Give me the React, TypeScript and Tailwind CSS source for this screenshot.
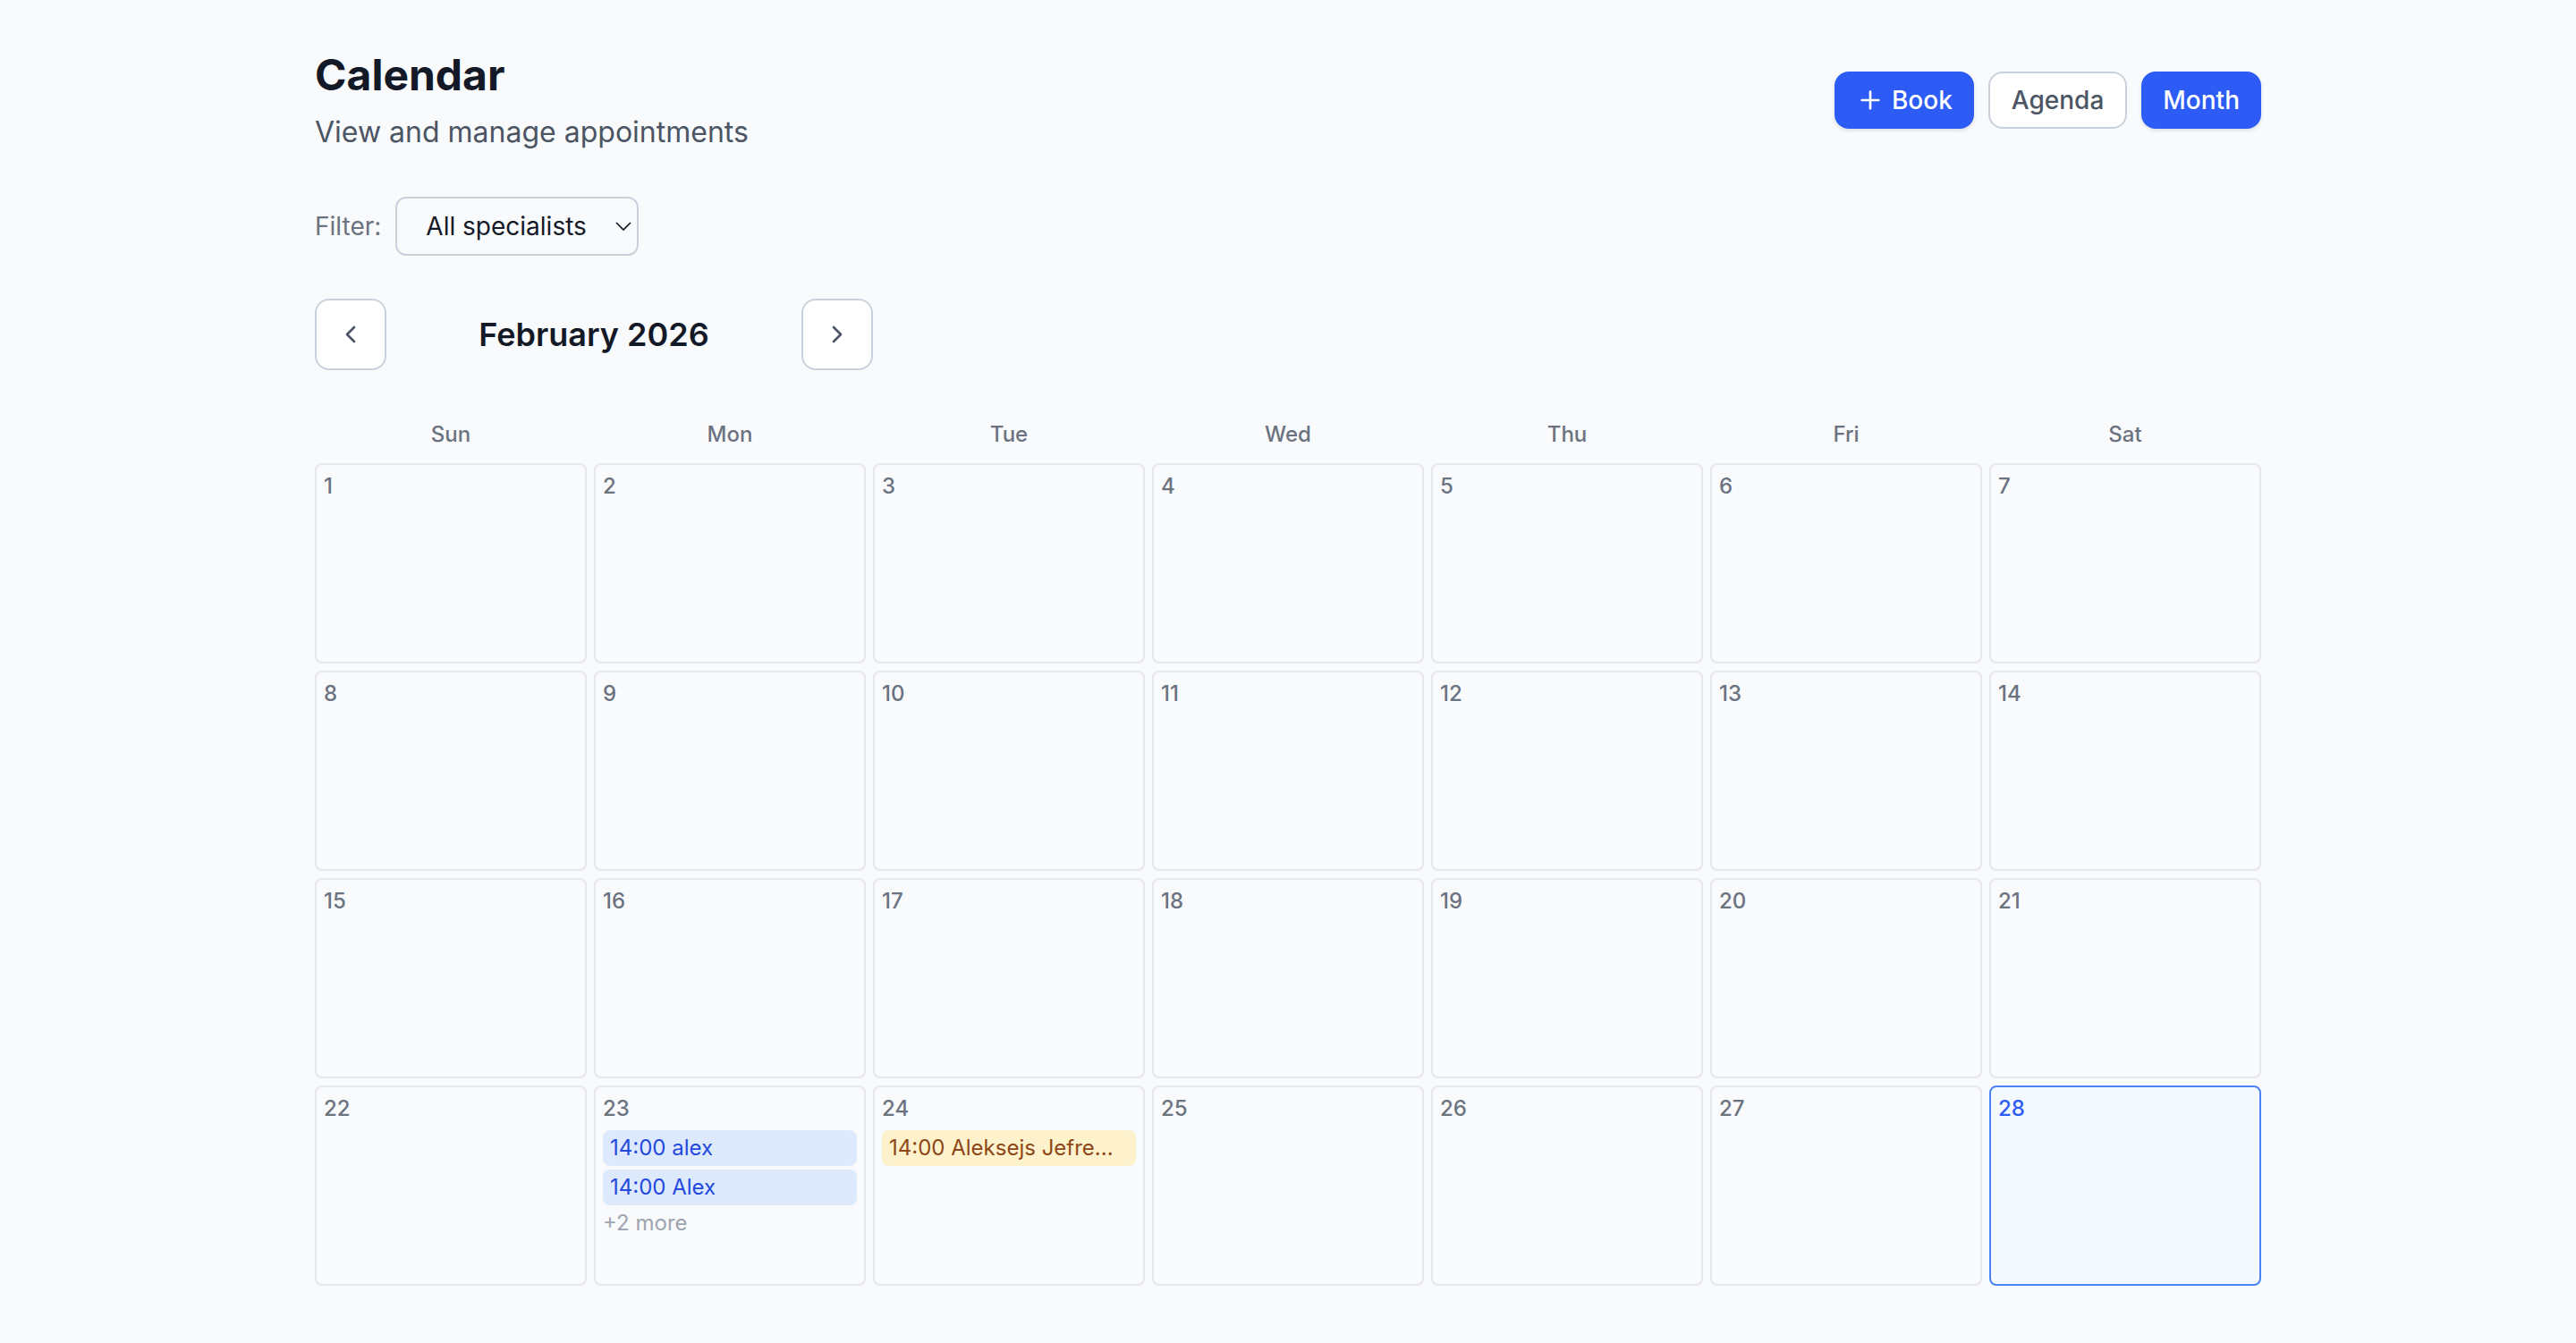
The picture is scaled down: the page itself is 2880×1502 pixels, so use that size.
import { ChevronLeft, ChevronRight, Plus } from 'lucide-react'

interface Appointment {
  time: string
  client: string
  status: 'confirmed' | 'pending'
}

const WEEKDAYS = ['Sun', 'Mon', 'Tue', 'Wed', 'Thu', 'Fri', 'Sat']
const DAYS = Array.from({ length: 28 }, (_, i) => i + 1)
const TODAY = 28
const MAX_VISIBLE = 2

const APPOINTMENTS: Record<number, Appointment[]> = {
  23: [
    { time: '14:00', client: 'alex', status: 'confirmed' },
    { time: '14:00', client: 'Alex', status: 'confirmed' },
    { time: '15:00', client: 'Alex', status: 'confirmed' },
    { time: '16:00', client: 'Alex', status: 'confirmed' },
  ],
  24: [{ time: '14:00', client: 'Aleksejs Jefre...', status: 'pending' }],
}

const STATUS_STYLES = {
  confirmed: 'bg-[#dde9fc] text-[#2449de]',
  pending: 'bg-[#fdf2cb] text-[#8e4617]',
}

const PRIMARY =
  'flex h-16 items-center gap-2 rounded-2xl bg-[#2c5cf5] px-6 text-[28px] leading-10 font-medium text-white shadow-[0_2px_4px_rgba(0,0,0,0.12)]'
const NAV_BUTTON =
  'flex size-20 items-center justify-center rounded-2xl border-2 border-[#cbd1dc] bg-white text-[#4b5564]'

function DayCell({ day }: { day: number }) {
  const items = APPOINTMENTS[day] ?? []
  const hidden = items.length - MAX_VISIBLE
  const isToday = day === TODAY

  return (
    <div
      className={`flex h-56 min-w-0 flex-col rounded-lg border-2 p-2 text-2xl ${
        isToday ? 'border-[#4b82f5] bg-[#f4f8ff]' : 'border-[#e5e7ec]'
      }`}
    >
      <span className={`mb-2 font-medium ${isToday ? 'text-[#2c5cf5]' : 'text-[#6b7280]'}`}>
        {day}
      </span>
      <div className="flex flex-col gap-1">
        {items.slice(0, MAX_VISIBLE).map((a, i) => (
          <a
            key={i}
            href="#"
            className={`block truncate rounded-lg px-2 py-1 ${STATUS_STYLES[a.status]}`}
          >
            {a.time} {a.client}
          </a>
        ))}
        {hidden > 0 && <span className="text-[#9ea4b0]">+{hidden} more</span>}
      </div>
    </div>
  )
}

export default function App() {
  return (
    <div className="min-h-screen bg-[#f9fafc] font-[Inter,sans-serif] text-[#131927]">
      <main className="mx-auto flex max-w-[2304px] flex-col gap-12 px-16 pt-[52px] pb-16">
        <header className="flex items-center justify-between">
          <div>
            <h1 className="text-5xl leading-16 font-bold">Calendar</h1>
            <p className="mt-2 text-[32px] leading-12 text-[#4b5564]">
              View and manage appointments
            </p>
          </div>
          <div className="flex items-center gap-4">
            <button type="button" className={PRIMARY}>
              <Plus size={32} />
              Book
            </button>
            <button
              type="button"
              className="h-16 rounded-2xl border-2 border-[#cbd1dc] bg-white px-6 text-[28px] leading-10 font-medium text-[#4b5564]"
            >
              Agenda
            </button>
            <button type="button" className={PRIMARY}>
              Month
            </button>
          </div>
        </header>

        <div className="flex items-center gap-4 text-[28px] leading-10">
          <label htmlFor="specialist" className="text-[#6b7280]">
            Filter:
          </label>
          <div className="relative">
            <select
              id="specialist"
              className="block h-[66px] w-[272px] appearance-none rounded-xl border-2 border-[#cbd1dc] bg-transparent pl-8"
            >
              <option>All specialists</option>
            </select>
            <svg
              viewBox="0 0 18 10"
              className="pointer-events-none absolute top-7 right-2 h-[10px] w-[18px]"
              fill="none"
              stroke="currentColor"
              strokeWidth="1.7"
            >
              <path d="M1 1l8 8 8-8" />
            </svg>
          </div>
        </div>

        <div className="flex items-center gap-8">
          <button type="button" aria-label="Previous month" className={NAV_BUTTON}>
            <ChevronLeft size={32} />
          </button>
          <h2 className="min-w-[400px] text-center text-4xl font-semibold">February 2026</h2>
          <button type="button" aria-label="Next month" className={NAV_BUTTON}>
            <ChevronRight size={32} />
          </button>
        </div>

        <section className="grid grid-cols-7 gap-2">
          {WEEKDAYS.map((d) => (
            <div key={d} className="py-2 text-center text-2xl font-medium text-[#6b7280]">
              {d}
            </div>
          ))}
          {DAYS.map((day) => (
            <DayCell key={day} day={day} />
          ))}
        </section>
      </main>
    </div>
  )
}
